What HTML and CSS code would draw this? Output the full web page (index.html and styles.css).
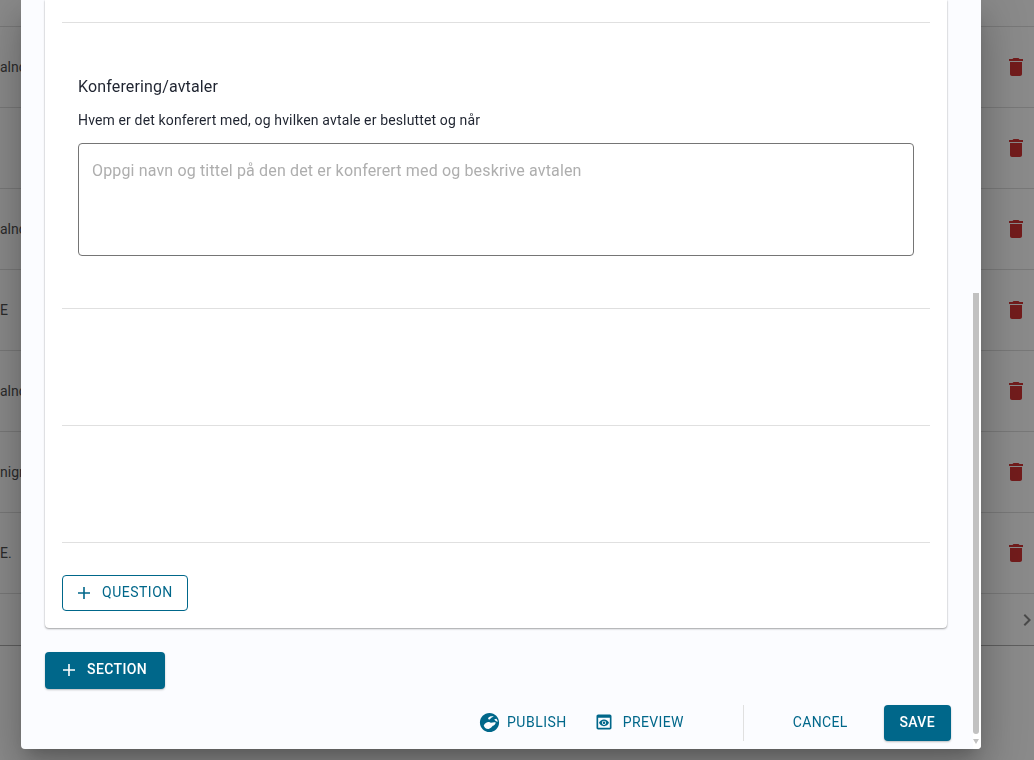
FILE: index.html
```html
<!DOCTYPE html>
<html lang="no">
<head>
<meta charset="utf-8">
<title>Skjema</title>
<link rel="stylesheet" href="styles.css">
</head>
<body>
<div class="backdrop-page">
  <div class="row row-first"></div>
  <div class="row"><span class="cell">alnc</span><svg class="trash" viewBox="0 0 24 24"><path d="M6 19c0 1.1.9 2 2 2h8c1.100 0 2-.9 2-2V7H6v12zM19 4h-3.500l-1-1h-5l-1 1H5v2h14V4z"/></svg></div>
  <div class="row"><span class="cell"></span><svg class="trash" viewBox="0 0 24 24"><path d="M6 19c0 1.1.9 2 2 2h8c1.100 0 2-.9 2-2V7H6v12zM19 4h-3.500l-1-1h-5l-1 1H5v2h14V4z"/></svg></div>
  <div class="row"><span class="cell">alnc</span><svg class="trash" viewBox="0 0 24 24"><path d="M6 19c0 1.1.9 2 2 2h8c1.100 0 2-.9 2-2V7H6v12zM19 4h-3.500l-1-1h-5l-1 1H5v2h14V4z"/></svg></div>
  <div class="row"><span class="cell">E</span><svg class="trash" viewBox="0 0 24 24"><path d="M6 19c0 1.1.9 2 2 2h8c1.100 0 2-.9 2-2V7H6v12zM19 4h-3.500l-1-1h-5l-1 1H5v2h14V4z"/></svg></div>
  <div class="row"><span class="cell">alnc</span><svg class="trash" viewBox="0 0 24 24"><path d="M6 19c0 1.1.9 2 2 2h8c1.100 0 2-.9 2-2V7H6v12zM19 4h-3.500l-1-1h-5l-1 1H5v2h14V4z"/></svg></div>
  <div class="row"><span class="cell">nigr</span><svg class="trash" viewBox="0 0 24 24"><path d="M6 19c0 1.1.9 2 2 2h8c1.100 0 2-.9 2-2V7H6v12zM19 4h-3.500l-1-1h-5l-1 1H5v2h14V4z"/></svg></div>
  <div class="row"><span class="cell">E.</span><svg class="trash" viewBox="0 0 24 24"><path d="M6 19c0 1.1.9 2 2 2h8c1.100 0 2-.9 2-2V7H6v12zM19 4h-3.500l-1-1h-5l-1 1H5v2h14V4z"/></svg></div>
  <div class="pager">
    <svg class="chev" viewBox="0 0 24 24"><path d="M10 6 8.590 7.410 13.170 12l-4.580 4.590L10 18l6-6z"/></svg>
    <svg class="chev" viewBox="0 0 24 24"><path d="M10 6 8.590 7.410 13.170 12l-4.580 4.590L10 18l6-6z"/></svg>
  </div>
</div>

<div class="dialog">
  <div class="dialog-body">
    <div class="scroll-area">
      <div class="card">
        <div class="rule"></div>
        <div class="question">
          <div class="q-title">Konferering/avtaler</div>
          <div class="q-help">Hvem er det konferert med, og hvilken avtale er besluttet og når</div>
          <div class="textbox">Oppgi navn og tittel på den det er konferert med og beskrive avtalen</div>
        </div>
        <div class="rule"></div>
        <div class="blank"></div>
        <div class="rule"></div>
        <div class="blank"></div>
        <div class="rule"></div>
        <button class="btn btn-outline"><svg class="plus" viewBox="0 0 24 24"><path d="M12 6v12M6 12h12"/></svg>QUESTION</button>
      </div>
      <button class="btn btn-solid btn-section"><svg class="plus" viewBox="0 0 24 24"><path d="M12 6v12M6 12h12"/></svg>SECTION</button>
      <div class="footer">
        <button class="btn btn-text btn-publish"><svg class="ficon globe" viewBox="0 0 24 24"><path fill-rule="evenodd" d="M12 2C6.480 2 2 6.480 2 12s4.480 10 10 10 10-4.480 10-10S17.520 2 12 2zM6 15c1-2 3-3.500 5-3.500 1 0 1.500.7 2.500.7 1.500 0 3-.7 5-.2-.3 2-1.700 3-3 3.500-1 1-2 2.700-4.500 3.200-2.500.3-4.500-1.700-5-3.700zM10.500 7.500c1.500-2 4-2.500 6-1.500-1.500.5-3 1-4 2.500-.5.700-1.500.700-2-1zM17 8.500l2.200-.5c.8 1 1.300 2 1.500 3.200-1.500-.2-3-1-3.700-2.700z"/></svg>PUBLISH</button>
        <button class="btn btn-text btn-preview"><svg class="ficon ficon-small" viewBox="0 0 24 24"><path d="M19 3H5c-1.110 0-2 .9-2 2v14c0 1.100.89 2 2 2h14c1.100 0 2-.9 2-2V5c0-1.100-.89-2-2-2zm0 16H5V7h14v12zm-5.500-6c0 .83-.67 1.500-1.500 1.500s-1.500-.67-1.500-1.500.67-1.500 1.500-1.500 1.500.67 1.500 1.500zM12 9c-2.730 0-5.060 1.660-6 4 .94 2.340 3.270 4 6 4s5.060-1.660 6-4c-.94-2.340-3.270-4-6-4zm0 6.500c-1.380 0-2.500-1.120-2.500-2.500s1.120-2.500 2.500-2.500 2.500 1.120 2.500 2.500-1.120 2.500-2.500 2.500z"/></svg>PREVIEW</button>
        <div class="vsep"></div>
        <button class="btn btn-text btn-cancel">CANCEL</button>
        <button class="btn btn-solid btn-save">SAVE</button>
      </div>
    </div>
    <div class="scrollbar"><div class="thumb"></div><div class="arrow"></div></div>
  </div>
</div>
</body>
</html>
```
FILE: styles.css
```css
* { box-sizing: border-box; }
html, body { margin: 0; padding: 0; height: 100%; overflow: hidden; }
body { background: #8a8a8a; font-family: Roboto, "Liberation Sans", sans-serif; }

.backdrop-page { height: 760px; display: flex; flex-direction: column; }
.row { height: 81px; flex: none; border-bottom: 1px solid #787878; display: flex; align-items: center; justify-content: space-between; padding-right: 6px; color: #2b2b2b; font-size: 14px; }
.row-first { height: 27px; }
.cell { white-space: nowrap; }
.trash { width: 24px; height: 24px; fill: #721c1c; }
.pager { height: 52px; flex: none; border-bottom: 1px solid #5e5e5e; display: flex; align-items: center; justify-content: flex-end; gap: 31px; }
.chev { width: 24px; height: 24px; fill: #4a4a4a; flex: none; margin-right: -5px; }

.dialog { position: fixed; left: 21px; top: 0; width: 960px; height: 749px; background: #fbfcff; border-radius: 0 0 4px 4px; box-shadow: 0 11px 15px -7px rgba(0,0,0,.2), 0 24px 38px 3px rgba(0,0,0,.14), 0 9px 46px 8px rgba(0,0,0,.12); overflow: hidden; }
.dialog-body { display: flex; height: 100%; }
.scroll-area { flex: 1; min-width: 0; padding-left: 24px; }
.scrollbar { width: 8px; flex: none; margin-top: 293px; background: #fff; display: flex; flex-direction: column; }
.thumb { width: 6px; height: 441px; background: #c1c1c1; border-radius: 0 0 3px 3px; }
.arrow { margin: 5px 0 0 0; width: 0; height: 0; border-left: 3px solid transparent; border-right: 3px solid transparent; border-top: 5px solid #c1c1c1; }

.card { width: 902px; height: 628px; background: #fff; border-radius: 0 0 4px 4px; box-shadow: 0 1px 2px rgba(0,0,0,.35), 0 0 1px rgba(0,0,0,.2); padding: 22px 17px 0; display: flex; flex-direction: column; }
.rule { height: 1px; background: #e0e0e0; flex: none; }
.question { height: 285px; padding: 54px 16px 0; color: #1f2430; }
.q-title { font-size: 16px; line-height: 20px; letter-spacing: .15px; }
.q-help { font-size: 14px; line-height: 20px; margin-top: 13px; letter-spacing: .14px; }
.textbox { height: 113px; margin-top: 13px; border: 1px solid #757575; border-radius: 4px; padding: 16px 13px; font-size: 16px; line-height: 22px; color: #aeaeae; letter-spacing: .15px; }
.blank { height: 116px; flex: none; }

.btn { font-family: Roboto, "Liberation Sans", sans-serif; font-size: 14px; letter-spacing: .5px; border-radius: 4px; cursor: pointer; display: inline-flex; align-items: center; padding: 0 0 2px; }
.plus { width: 24px; height: 24px; fill: none; stroke: currentColor; stroke-width: 1.6; flex: none; }
.btn-outline { align-self: flex-start; margin-top: 32px; width: 126px; height: 36px; background: #fff; border: 1px solid #00678a; color: #00678a; padding-left: 9px; gap: 6px; }
.btn-outline .plus { margin-top: 2px; }
.btn-solid { background: #00678a; border: 0; color: #fff; font-weight: 500; box-shadow: 0 1px 2px rgba(0,0,0,.25); }
.btn-section { margin-top: 24px; width: 120px; height: 37px; padding-left: 12px; padding-bottom: 3px; gap: 6px; letter-spacing: .4px; }
.btn-section .plus { margin-top: 2px; }
.footer { display: flex; align-items: center; margin-top: 16px; height: 36px; }
.btn-text { background: none; border: 0; color: #00678a; height: 36px; }
.ficon { width: 23px; height: 23px; fill: currentColor; flex: none; }
.ficon-small { width: 20px; height: 20px; }
.btn-publish { margin-left: 433px; gap: 6px; }
.btn-preview { margin-left: 27px; gap: 9px; letter-spacing: .35px; }
.vsep { width: 1px; height: 36px; background: #e0e0e0; margin-left: 59px; }
.btn-cancel { margin-left: 49px; letter-spacing: .35px; }
.btn-save { margin-left: 36px; width: 67px; height: 36px; justify-content: center; letter-spacing: .3px; }
```
